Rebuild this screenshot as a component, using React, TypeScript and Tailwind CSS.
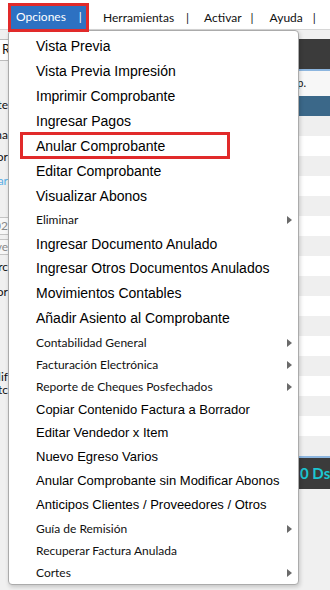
import React from "react";

type Size = "lg" | "md" | "sm";

type Item = {
  label: string;
  size: Size;
  h: number;
  arrow?: boolean;
  marked?: boolean;
};

const items: Item[] = [
  { label: "Vista Previa", size: "lg", h: 25 },
  { label: "Vista Previa Impresión", size: "lg", h: 25 },
  { label: "Imprimir Comprobante", size: "lg", h: 25 },
  { label: "Ingresar Pagos", size: "lg", h: 25 },
  { label: "Anular Comprobante", size: "lg", h: 25, marked: true },
  { label: "Editar Comprobante", size: "lg", h: 25 },
  { label: "Visualizar Abonos", size: "lg", h: 24 },
  { label: "Eliminar", size: "sm", h: 24, arrow: true },
  { label: "Ingresar Documento Anulado", size: "lg", h: 24 },
  { label: "Ingresar Otros Documentos Anulados", size: "lg", h: 25 },
  { label: "Movimientos Contables", size: "lg", h: 25 },
  { label: "Añadir Asiento al Comprobante", size: "lg", h: 25 },
  { label: "Contabilidad General", size: "sm", h: 23, arrow: true },
  { label: "Facturación Electrónica", size: "sm", h: 22, arrow: true },
  { label: "Reporte de Cheques Posfechados", size: "sm", h: 22, arrow: true },
  { label: "Copiar Contenido Factura a Borrador", size: "md", h: 23 },
  { label: "Editar Vendedor x Item", size: "md", h: 24 },
  { label: "Nuevo Egreso Varios", size: "md", h: 24 },
  { label: "Anular Comprobante sin Modificar Abonos", size: "md", h: 24 },
  { label: "Anticipos Clientes / Proveedores / Otros", size: "md", h: 24 },
  { label: "Guía de Remisión", size: "sm", h: 23, arrow: true },
  { label: "Recuperar Factura Anulada", size: "sm", h: 22 },
  { label: "Cortes", size: "sm", h: 22, arrow: true },
];

const sizeClass: Record<Size, string> = {
  lg: "font-['Liberation_Sans',Arial,sans-serif] text-[14px] text-black",
  md: "font-['Liberation_Sans',Arial,sans-serif] text-[13px] text-black",
  sm: "font-['Lato',sans-serif] text-[12px] text-[#111]",
};

const rows = Array.from({ length: 17 }, (_, i) => i);

function Clip({ text, className = "" }: { text: string; className?: string }) {
  // only the tail of the label peeks out from under the menu
  return (
    <div className={`flex w-[8px] justify-end overflow-hidden whitespace-nowrap ${className}`}>
      <span>{text}</span>
    </div>
  );
}

export default function App() {
  return (
    <div className="relative h-[590px] w-[330px] overflow-hidden bg-[#f0f0f0] font-['Lato',sans-serif] text-[12px] text-[#111]">
      {/* top menu bar */}
      <div className="flex h-[30px] items-center border-b border-[#d6d6d6] bg-white">
        <div className="ml-[11px] mt-[5px] flex h-[23px] w-[75px] shrink-0 items-center bg-[#2d71c2] pl-[5px] text-white">
          <span>Opciones</span>
          <span className="ml-[13px]">|</span>
        </div>
        <span className="ml-[17px] mt-[7px]">Herramientas</span>
        <span className="ml-[12px] mt-[7px]">|</span>
        <span className="ml-[15px] mt-[7px]">Activar</span>
        <span className="ml-[9px] mt-[7px]">|</span>
        <span className="ml-[16px] mt-[7px]">Ayuda</span>
        <span className="ml-[10px] mt-[7px]">|</span>
      </div>
      <div className="pointer-events-none absolute left-[8px] top-[3px] z-20 h-[29px] w-[81px] border-[3px] border-[#e12a2a]" />

      {/* app body behind the menu */}
      <div className="flex">
        <div className="flex w-[150px] shrink-0 flex-col text-[12px]">
          <div className="mt-[9px] flex h-[22px] w-[140px] items-center border border-l-0 border-[#bdbdbd] bg-white pl-[2px] text-[13px]">
            RUC / Cédula
          </div>
          <div className="mt-[34px] flex h-[20px] items-center">
            <Clip text="Cliente" />
          </div>
          <div className="mt-[10px] flex h-[20px] items-center">
            <Clip text="Fecha" />
          </div>
          <div className="mt-[2px] flex h-[20px] items-center">
            <Clip text="Vendedor" />
          </div>
          <div className="mt-[4px] flex h-[20px] items-center">
            <Clip text="Buscar" className="text-[#5aaee6]" />
          </div>
          <div className="mt-[26px] flex h-[18px] w-[140px] items-center border border-l-0 border-[#c4c4c4] bg-[#f7f7f7] text-[#8a8a8a]">
            <Clip text="2024/02" />
          </div>
          <div className="mt-[4px] flex h-[16px] w-[140px] items-center border border-l-0 border-[#c4c4c4] bg-[#f7f7f7] text-[#8a8a8a]">
            <Clip text="Clave" />
          </div>
          <div className="mt-[2px] flex h-[20px] items-center">
            <Clip text="Porc" />
          </div>
          <div className="mt-[5px] flex h-[20px] items-center">
            <Clip text="Vendedor" />
          </div>
          <div className="mt-[68px] flex h-[13px] items-center">
            <Clip text="Calif" />
          </div>
          <div className="flex h-[13px] items-center">
            <Clip text="Estc" />
          </div>
        </div>

        <div className="flex min-w-0 flex-1 flex-col overflow-hidden">
          <div className="h-[9px]" />
          <div className="h-[30px] bg-[#3b3b3b]" />
          <div className="h-[2px] bg-[#8db6df]" />
          <div className="flex h-[25px] items-center bg-[#f7f7f7] text-[11px]">
            <div className="flex w-[156px] shrink-0 justify-end">F. Comp.</div>
          </div>
          <div className="h-[20px] bg-[#3b6889]" />
          {rows.map((r) => (
            <div key={r} className={r % 2 === 0 ? "h-[20px] bg-[#efefef]" : "h-[20px] bg-white"} />
          ))}
          <div className="h-[2px] bg-[#8db6df]" />
          <div className="flex h-[31px] items-center whitespace-nowrap bg-[#3b3b3b] pl-[150px] text-[15px] font-bold text-[#1cc6d2]">
            <span className="shrink-0">0 Dscto: 0.00</span>
          </div>
        </div>
      </div>

      {/* Opciones dropdown */}
      <div className="absolute left-[8px] top-[30px] z-10 w-[291px] rounded-[4px] border border-[#ababab] bg-white pt-[3px] shadow-[1px_2px_4px_rgba(0,0,0,0.18)]">
        {items.map((it) => (
          <div
            key={it.label}
            style={{ height: it.h }}
            className="relative flex items-center justify-between whitespace-nowrap pl-[27px] pr-[6px]"
          >
            <span className={sizeClass[it.size]}>{it.label}</span>
            {it.arrow && (
              <span className="h-0 w-0 shrink-0 border-y-[4px] border-l-[5px] border-y-transparent border-l-[#6a6a6a]" />
            )}
            {it.marked && (
              <div className="absolute left-[11px] top-[-2px] h-[27px] w-[210px] border-[3px] border-[#e12a2a]" />
            )}
          </div>
        ))}
      </div>
    </div>
  );
}
